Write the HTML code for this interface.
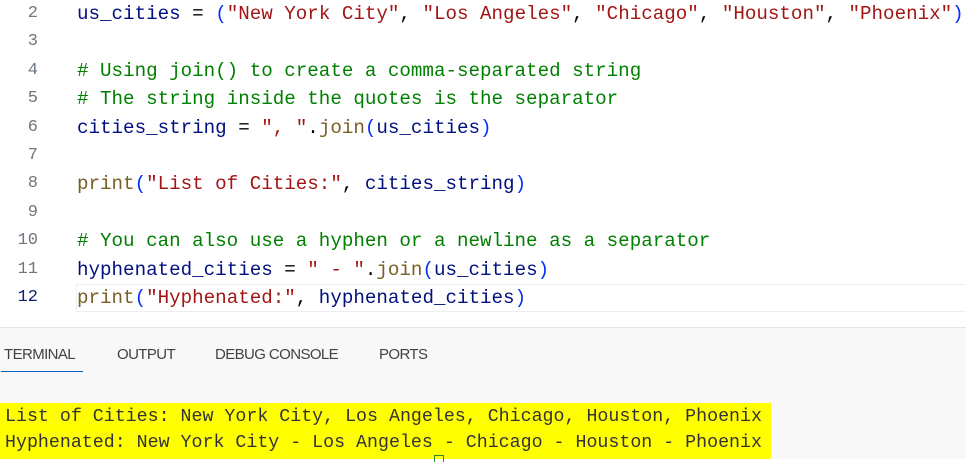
<!DOCTYPE html>
<html><head><style>
body{margin:0;width:966px;height:458px;overflow:hidden;background:#fff;position:relative;font-family:"Liberation Mono",monospace}
.ln{position:absolute;left:0;width:38px;text-align:right;font-family:"Liberation Mono",monospace;font-size:17px;color:#6e7681;line-height:28px}
.cd{position:absolute;left:77px;font-family:"Liberation Mono",monospace;font-size:19.2px;white-space:pre;line-height:28px;color:#001080}
.cd span{font-family:"Liberation Mono",monospace}
.s{color:#a31515}.c{color:#008000}.f{color:#795e26}.p{color:#0431fa}.k{color:#000}
#panel{position:absolute;left:0;top:327px;width:966px;height:131px;background:#f8f8f8;border-top:1px solid #e5e5e5}
.tab{position:absolute;top:18px;font-family:"Liberation Sans",sans-serif;font-size:15px;color:#424242;letter-spacing:-0.6px}
#out{position:absolute;left:0;top:75px;width:771px;height:56px;background:#ffff00}
.o{position:absolute;left:5px;font-family:"Liberation Mono",monospace;font-size:18.3px;white-space:pre;color:#333;line-height:26px}
</style></head><body>
<div class="ln" style="top:0">2</div>
<div class="ln" style="top:28px">3</div>
<div class="ln" style="top:57px">4</div>
<div class="ln" style="top:85px">5</div>
<div class="ln" style="top:114px">6</div>
<div class="ln" style="top:142px">7</div>
<div class="ln" style="top:170px">8</div>
<div class="ln" style="top:199px">9</div>
<div class="ln" style="top:227px">10</div>
<div class="ln" style="top:256px">11</div>
<div class="ln" style="top:284px;color:#0b216f">12</div>
<div style="position:absolute;left:76px;top:284px;width:892px;height:26px;border:1px solid #eee"></div>
<div class="cd" style="top:0">us_cities <span class="k">=</span> <span class="p">(</span><span class="s">"New York City"</span><span class="k">,</span> <span class="s">"Los Angeles"</span><span class="k">,</span> <span class="s">"Chicago"</span><span class="k">,</span> <span class="s">"Houston"</span><span class="k">,</span> <span class="s">"Phoenix"</span><span class="p">)</span></div>
<div class="cd c" style="top:57px"># Using join() to create a comma-separated string</div>
<div class="cd c" style="top:85px"># The string inside the quotes is the separator</div>
<div class="cd" style="top:114px">cities_string <span class="k">=</span> <span class="s">", "</span><span class="k">.</span><span class="f">join</span><span class="p">(</span>us_cities<span class="p">)</span></div>
<div class="cd" style="top:170px"><span class="f">print</span><span class="p">(</span><span class="s">"List of Cities:"</span><span class="k">,</span> cities_string<span class="p">)</span></div>
<div class="cd c" style="top:227px"># You can also use a hyphen or a newline as a separator</div>
<div class="cd" style="top:256px">hyphenated_cities <span class="k">=</span> <span class="s">" - "</span><span class="k">.</span><span class="f">join</span><span class="p">(</span>us_cities<span class="p">)</span></div>
<div class="cd" style="top:284px"><span class="f">print</span><span class="p">(</span><span class="s">"Hyphenated:"</span><span class="k">,</span> hyphenated_cities<span class="p">)</span></div>
<div id="panel">
<div class="tab" style="left:4px">TERMINAL</div>
<div style="position:absolute;left:1px;top:43px;width:82px;height:1px;background:#005fb8"></div>
<div class="tab" style="left:117px">OUTPUT</div>
<div class="tab" style="left:215px">DEBUG CONSOLE</div>
<div class="tab" style="left:379px">PORTS</div>
<div id="out">
<div class="o" style="top:1px">List of Cities: New York City, Los Angeles, Chicago, Houston, Phoenix</div>
<div class="o" style="top:27px">Hyphenated: New York City - Los Angeles - Chicago - Houston - Phoenix</div>
</div>
<div style="position:absolute;left:434px;top:127px;width:8px;height:6px;border:1px solid #2a8a2a;border-bottom:none"></div>
</div>
</body></html>
